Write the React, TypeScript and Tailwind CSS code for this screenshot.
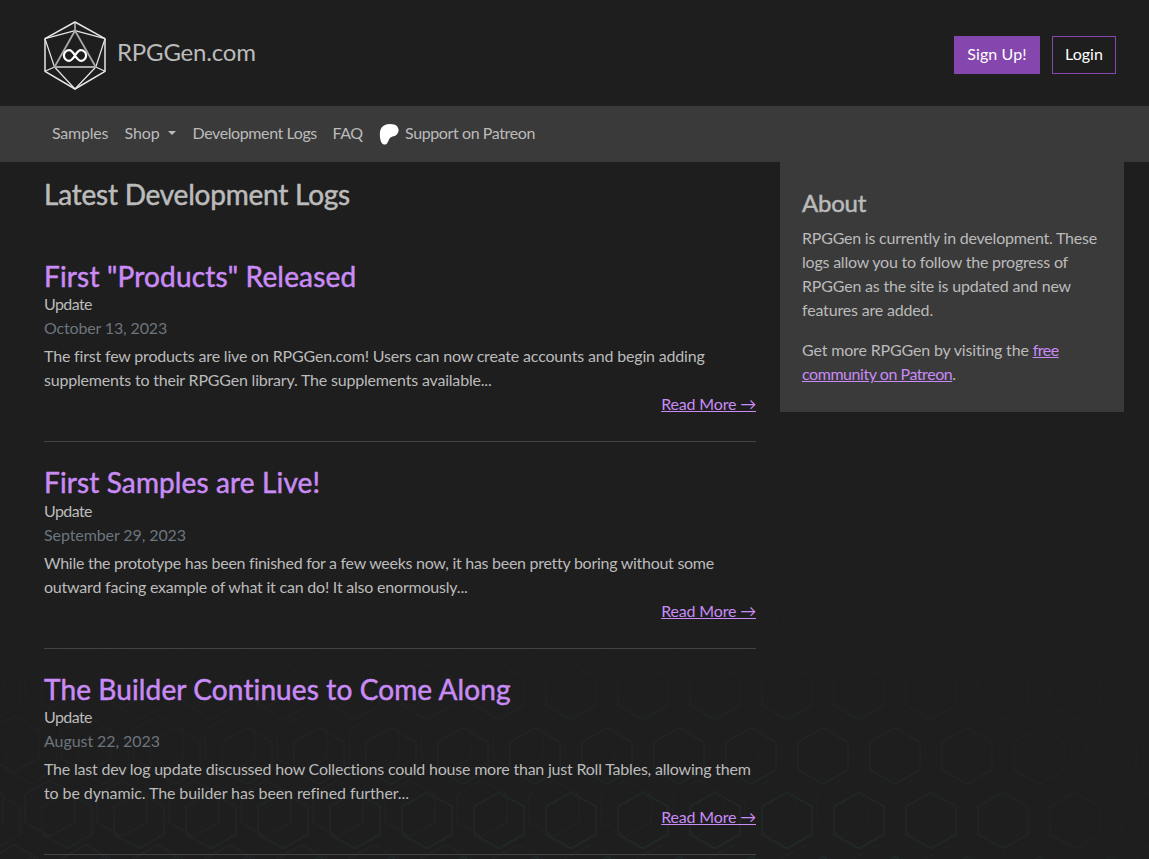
import React from 'react';

const posts = [
  {
    title: 'First "Products" Released',
    titleClass: 'tracking-[0.17px]',
    category: 'Update',
    date: 'October 13, 2023',
    dateClass: 'tracking-[-0.157px]',
    lines: [
      { text: 'The first few products are live on RPGGen.com! Users can now create accounts and begin adding', className: 'tracking-[-0.178px]' },
      { text: 'supplements to their RPGGen library. The supplements available...', className: 'tracking-[-0.192px]' },
    ],
  },
  {
    title: 'First Samples are Live!',
    titleClass: 'tracking-[0.13px]',
    category: 'Update',
    date: 'September 29, 2023',
    dateClass: 'tracking-[-0.092px]',
    lines: [
      { text: 'While the prototype has been finished for a few weeks now, it has been pretty boring without some', className: 'tracking-[-0.276px]' },
      { text: 'outward facing example of what it can do! It also enormously...', className: 'tracking-[-0.209px]' },
    ],
  },
  {
    title: 'The Builder Continues to Come Along',
    titleClass: 'tracking-[0.12px]',
    category: 'Update',
    date: 'August 22, 2023',
    dateClass: 'tracking-[-0.065px]',
    lines: [
      { text: 'The last dev log update discussed how Collections could house more than just Roll Tables, allowing them', className: 'tracking-[-0.208px]' },
      { text: 'to be dynamic. The builder has been refined further...', className: 'tracking-[-0.1px]' },
    ],
  },
];

const aboutLines = [
  { text: 'RPGGen is currently in development. These', className: 'tracking-[-0.216px]' },
  { text: 'logs allow you to follow the progress of', className: 'tracking-[-0.205px]' },
  { text: 'RPGGen as the site is updated and new', className: 'tracking-[-0.193px]' },
  { text: 'features are added.', className: 'tracking-[-0.174px]' },
];

function Logo() {
  return (
    <svg width="70" height="76" viewBox="0 0 70 76" fill="none" stroke="#e6e6e6" strokeLinejoin="round">
      <path strokeWidth="1.5" d="M35 4 65 20.7V53.3L35 71 5 53.3V20.7Z" />
      <path strokeWidth="1.2" d="M35 4V12.7M5 20.7 35 12.7 65 20.7M5 20.7 14.5 49 5 53.3M65 20.7 55.8 49 65 53.3M14.5 49 35 71 55.8 49" />
      <path strokeWidth="1.8" stroke="#a8a8a8" d="M35 12.7 14.5 49H55.8Z" />
      <path strokeWidth="2.2" stroke="#fff" d="M35 37.5C33 34.3 31.5 32.2 29.2 32.2a5.3 5.3 0 0 0 0 10.6C31.500 42.800 33 40.700 35 37.500S38.500 32.200 40.800 32.200a5.300 5.300 0 0 1 0 10.600C38.500 42.800 37 40.700 35 37.500Z" />
    </svg>
  );
}

function PatreonIcon() {
  return (
    <svg width="20.500" height="20.500" viewBox="0 0 24 24" fill="#fff">
      <path d="M22.957 7.21c-.004-3.064-2.391-5.576-5.191-6.482-3.478-1.125-8.064-.962-11.384.604C2.357 3.231 1.093 7.391 1.046 11.54c-.039 3.411.302 12.396 5.369 12.46 3.765.047 4.326-4.804 6.068-7.141 1.24-1.662 2.836-2.132 4.801-2.618 3.376-.836 5.678-3.501 5.673-7.031Z" />
    </svg>
  );
}

// Two offset hexagon layers that fade out towards the top of the page
function HexBackground() {
  const hex = 'l25 14v28l-25 14l-25 -14v-28z';
  return (
    <svg className="absolute inset-0 -z-10" width="1149" height="859" fill="none">
      <defs>
        <pattern id="teal" width="72" height="129" patternUnits="userSpaceOnUse" x="31" y="792">
          <path d={`M36 0.5${hex}M0 65${hex}M72 65${hex}`} stroke="#222d2d" strokeWidth="1.5" />
        </pattern>
        <pattern id="violet" width="72" height="129" patternUnits="userSpaceOnUse" x="14" y="780">
          <path d={`M36 0.5${hex}M0 65${hex}M72 65${hex}`} stroke="#28262c" strokeWidth="1.3" />
        </pattern>
        <linearGradient id="rise" x1="0" y1="1" x2="0" y2="0">
          <stop offset="0" stopColor="#fff" stopOpacity="0.8" />
          <stop offset="1" stopColor="#fff" stopOpacity="0" />
        </linearGradient>
        <mask id="fade">
          <rect y="580" width="1149" height="279" fill="url(#rise)" />
        </mask>
        <linearGradient id="right">
          <stop offset="0" stopColor="#fff" stopOpacity="0.5" />
          <stop offset="0.45" stopColor="#fff" />
          <stop offset="0.75" stopColor="#fff" />
          <stop offset="1" stopColor="#fff" stopOpacity="0.3" />
        </linearGradient>
        <linearGradient id="left">
          <stop offset="0" stopColor="#fff" />
          <stop offset="0.8" stopColor="#fff" stopOpacity="0.4" />
          <stop offset="1" stopColor="#fff" stopOpacity="0" />
        </linearGradient>
        <mask id="sideRight">
          <rect width="1149" height="859" fill="url(#right)" />
        </mask>
        <mask id="sideLeft">
          <rect width="1149" height="859" fill="url(#left)" />
        </mask>
      </defs>
      <g mask="url(#fade)">
        <rect y="580" width="1149" height="279" fill="url(#violet)" mask="url(#sideLeft)" />
        <rect y="580" width="1149" height="279" fill="url(#teal)" mask="url(#sideRight)" />
      </g>
    </svg>
  );
}

export default function App() {
  return (
    <div className="relative isolate h-[859px] overflow-hidden bg-[#1e1e1e] font-['Lato','Liberation_Sans',sans-serif] text-base whitespace-nowrap text-[#bbb]">
      <HexBackground />
      <header className="flex h-[106px] items-center justify-between pr-[33px] pl-10">
        <a href="#" className="flex items-center gap-[7px] pt-1.5">
          <Logo />
          <span className="pb-2 text-2xl tracking-[-0.2px]">RPGGen.com</span>
        </a>
        <div className="flex gap-3 pt-1 text-white">
          <button className="h-[38px] w-[86px] border border-[#8547ad] bg-[#8547ad] pb-0.5 tracking-[0.11px]">Sign Up!</button>
          <button className="h-[38px] w-16 border border-[#8547ad] pb-0.5">Login</button>
        </div>
      </header>

      <nav className="flex h-14 items-center bg-[#3a3a3a] pb-0.5 pl-[52px]">
        <a href="#" className="w-[72.500px] tracking-[-0.22px]">Samples</a>
        <a href="#" className="flex w-[68px] items-center tracking-[-0.13px]">
          Shop
          <span className="ml-2 border-x-4 border-t-4 border-x-transparent border-t-[#bbb]" />
        </a>
        <a href="#" className="w-[140px] tracking-[-0.4px]">Development Logs</a>
        <a href="#" className="w-[46px] tracking-[-0.49px]">FAQ</a>
        <a href="#" className="flex items-center tracking-[-0.394px]">
          <span className="mr-1.5 pt-[3px]"><PatreonIcon /></span>
          Support on Patreon
        </a>
      </nav>

      <div className="flex items-start gap-6 pl-11">
        <main className="w-[712px] pt-[15px]">
          <h1 className="mb-[48.500px] text-[28px] leading-[34px] tracking-[-0.22px] [-webkit-text-stroke:0.5px]">Latest Development Logs</h1>
          {posts.map((post) => (
            <article key={post.title} className="mb-6 border-b border-[#434343] pb-[25px] leading-6">
              <h2 className={`-mb-px text-[28px] leading-[33.600px] text-[#c98bf5] [-webkit-text-stroke:0.5px] ${post.titleClass}`}>{post.title}</h2>
              <div className="tracking-[-0.576px]">{post.category}</div>
              <div className={`mb-1 text-[#6c757d] ${post.dateClass}`}>{post.date}</div>
              {post.lines.map((line) => (
                <div key={line.text} className={line.className}>{line.text}</div>
              ))}
              <div className="text-right text-[#c98bf5]">
                <a href="#" className="tracking-[-0.17px] underline">Read More →</a>
              </div>
            </article>
          ))}
        </main>

        <aside className="h-[250px] w-[344px] bg-[#3a3a3a] px-[22px] pt-[26px] leading-6">
          <h2 className="mb-[9px] text-2xl leading-[29px] tracking-[-0.25px] [-webkit-text-stroke:0.5px]">About</h2>
          <p className="mb-4">
            {aboutLines.map((line) => (
              <span key={line.text} className={`block ${line.className}`}>{line.text}</span>
            ))}
          </p>
          <p>
            <span className="tracking-[-0.16px]">Get more RPGGen by visiting the </span>
            <a href="#" className="text-[#c98bf5] underline">
              <span className="tracking-[-0.5px]">free</span>
              <br />
              <span className="tracking-[-0.45px]">community on Patreon</span>
            </a>
            .
          </p>
        </aside>
      </div>
    </div>
  );
}
